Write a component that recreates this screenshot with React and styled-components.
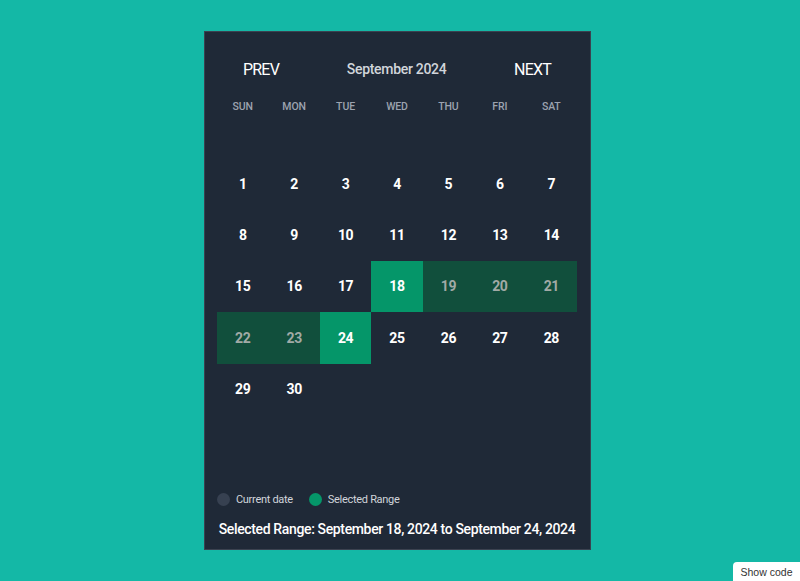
import React, { useState } from "react";
import styled, { createGlobalStyle } from "styled-components";

const GlobalStyle = createGlobalStyle`
  html, body {
    margin: 0;
    padding: 0;
    background: #14b8a6;
    font-family: Roboto, "Liberation Sans", sans-serif;
  }
`;

const PageStyled = styled.div`
  min-height: 100vh;
  display: flex;
  align-items: center;
  justify-content: center;
  padding-right: 6px;
  box-sizing: border-box;
`;

const CardStyled = styled.div`
  width: 387px;
  box-sizing: border-box;
  background: #1f2937;
  border: 1px solid #3b4250;
  padding: 25px 12.5px 10px;
  display: flex;
  flex-direction: column;
`;

const HeaderStyled = styled.div`
  display: flex;
  justify-content: space-between;
  align-items: center;
  height: 24px;
  padding: 0 26px;
`;

const NavButton = styled.button`
  background: none;
  border: none;
  padding: 0;
  color: #ffffff;
  font-family: inherit;
  font-size: 16px;
  letter-spacing: -0.8px;
  cursor: pointer;
`;

const MonthTitle = styled.span`
  color: #d1d5db;
  font-size: 14px;
  font-weight: 500;
  letter-spacing: -0.3px;
`;

const WeekRow = styled.div`
  display: grid;
  grid-template-columns: repeat(7, 1fr);
  margin-top: 18px;
  height: 16px;
  margin-bottom: 42.8px;
`;

const WeekDay = styled.div`
  text-align: center;
  color: #9ca3af;
  font-size: 10.5px;
  font-weight: 500;
  line-height: 16px;
  letter-spacing: -0.1px;
`;

const DaysGrid = styled.div`
  display: grid;
  grid-template-columns: repeat(7, 1fr);
  grid-auto-rows: 51.43px;
`;

const DayCell = styled.div`
  display: flex;
  align-items: center;
  justify-content: center;
  font-size: 14px;
  font-weight: 700;
  letter-spacing: -0.4px;
  color: ${(p) => (p.$inRange ? "#a1aaa6" : "#ffffff")};
  background: ${(p) =>
    p.$edge ? "#059669" : p.$inRange ? "#114f3c" : "transparent"};
  cursor: ${(p) => (p.$empty ? "default" : "pointer")};
`;

const LegendRow = styled.div`
  display: flex;
  align-items: center;
  gap: 16px;
  height: 16px;
  margin-top: 77px;
`;

const LegendItem = styled.div`
  display: flex;
  align-items: center;
  gap: 6px;
  color: #d1d5db;
  font-size: 11px;
  letter-spacing: -0.3px;
`;

const Dot = styled.span`
  width: 13px;
  height: 13px;
  border-radius: 50%;
  background: ${(p) => p.$color};
`;

const RangeText = styled.p`
  margin: 11px 0 0;
  line-height: 20px;
  color: #ffffff;
  font-size: 14px;
  font-weight: 500;
  letter-spacing: -0.36px;
  text-align: center;
`;

const ShowCode = styled.button`
  position: fixed;
  right: 0;
  bottom: 0;
  width: 67px;
  height: 19px;
  border: none;
  border-top-left-radius: 4px;
  background: #ffffff;
  color: #333333;
  font-family: "Liberation Sans", sans-serif;
  font-size: 10.5px;
  padding: 0;
`;

const WEEKDAYS = ["SUN", "MON", "TUE", "WED", "THU", "FRI", "SAT"];

const App = () => {
  const [range] = useState({ start: 18, end: 24 });
  const firstDay = new Date(2024, 8, 1).getDay();
  const cells = [];
  for (let i = 0; i < firstDay; i++) cells.push(null);
  for (let d = 1; d <= 30; d++) cells.push(d);

  return (
    <PageStyled>
      <GlobalStyle />
      <CardStyled>
        <HeaderStyled>
          <NavButton>PREV</NavButton>
          <MonthTitle>September 2024</MonthTitle>
          <NavButton>NEXT</NavButton>
        </HeaderStyled>
        <WeekRow>
          {WEEKDAYS.map((w) => (
            <WeekDay key={w}>{w}</WeekDay>
          ))}
        </WeekRow>
        <DaysGrid>
          {cells.map((d, i) => {
            const edge = d === range.start || d === range.end;
            const inRange = d > range.start && d < range.end;
            return (
              <DayCell key={i} $edge={edge} $inRange={inRange} $empty={!d}>
                {d}
              </DayCell>
            );
          })}
        </DaysGrid>
        <LegendRow>
          <LegendItem>
            <Dot $color="#374151" />
            Current date
          </LegendItem>
          <LegendItem>
            <Dot $color="#059669" />
            Selected Range
          </LegendItem>
        </LegendRow>
        <RangeText>
          Selected Range: September 18, 2024 to September 24, 2024
        </RangeText>
      </CardStyled>
      <ShowCode>Show code</ShowCode>
    </PageStyled>
  );
};

export default App;
